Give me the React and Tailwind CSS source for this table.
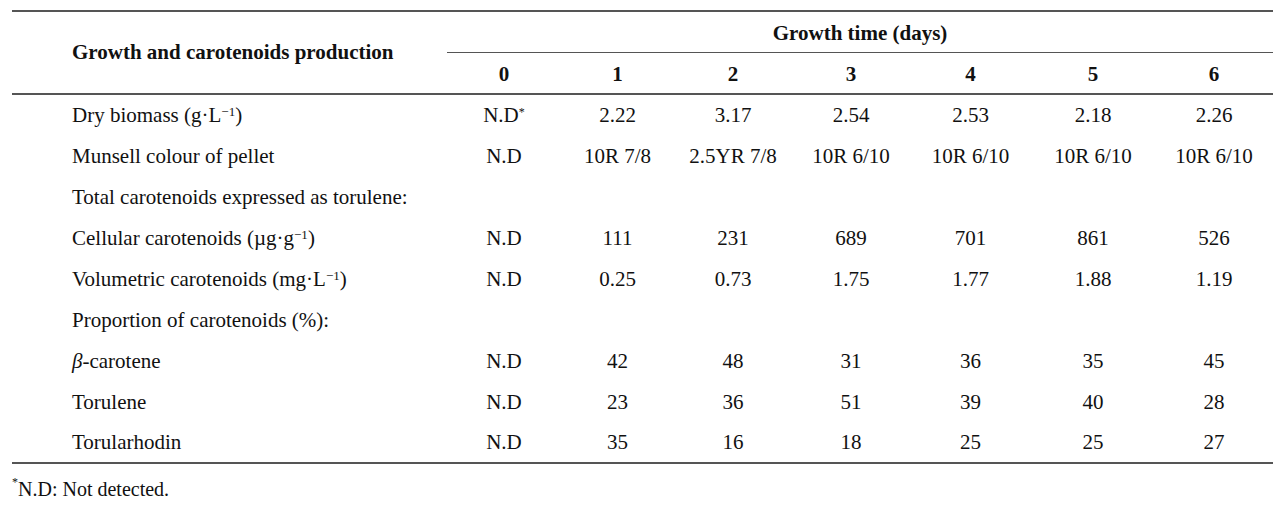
const cols = "grid grid-cols-[435px_114px_113px_118px_118px_121px_124px_118px]";

const rows = [
  { label: <>Dry biomass (g·L<sup className="text-[13px]">−1</sup>)</>, values: ["N.D*", "2.22", "3.17", "2.54", "2.53", "2.18", "2.26"] },
  { label: "Munsell colour of pellet", values: ["N.D", "10R 7/8", "2.5YR 7/8", "10R 6/10", "10R 6/10", "10R 6/10", "10R 6/10"] },
  { label: "Total carotenoids expressed as torulene:" },
  { label: <>Cellular carotenoids (µg·g<sup className="text-[13px]">−1</sup>)</>, values: ["N.D", "111", "231", "689", "701", "861", "526"] },
  { label: <>Volumetric carotenoids (mg·L<sup className="text-[13px]">−1</sup>)</>, values: ["N.D", "0.25", "0.73", "1.75", "1.77", "1.88", "1.19"] },
  { label: "Proportion of carotenoids (%):" },
  { label: <><i>β</i>-carotene</>, values: ["N.D", "42", "48", "31", "36", "35", "45"] },
  { label: "Torulene", values: ["N.D", "23", "36", "51", "39", "40", "28"] },
  { label: "Torularhodin", values: ["N.D", "35", "16", "18", "25", "25", "27"] },
];

function Value({ v }) {
  if (v.endsWith("*")) {
    return (
      <span>
        {v.slice(0, -1)}
        <sup className="text-[12px]">*</sup>
      </span>
    );
  }
  return <span>{v}</span>;
}

export default function App() {
  return (
    <div className="w-[1282px] h-[508px] bg-white text-[#111] font-['Liberation_Serif',serif] text-[21px] leading-none pl-3 pt-[10px]">
      <div className="w-[1261px]">
        {/* Header */}
        <div className={`${cols} border-t-2 border-b-2 border-[#555]`}>
          <div className="row-span-2 flex items-center pl-[60px] font-bold">
            Growth and carotenoids production
          </div>
          <div className="col-span-7 h-[41px] border-b border-[#555] flex items-center justify-center font-bold pt-[2px]">
            Growth time (days)
          </div>
          {[0, 1, 2, 3, 4, 5, 6].map((d) => (
            <div key={d} className="h-[40px] flex items-center justify-center font-bold pt-[3px]">
              {d}
            </div>
          ))}
        </div>

        {/* Body */}
        <div className="border-b-2 border-[#555]">
          {rows.map((r, i) => (
            <div
              key={i}
              className={`${cols} ${i === rows.length - 1 ? "h-[39px] pb-[1px]" : "h-[41px]"} items-center`}
            >
              <div className="pl-[60px] whitespace-nowrap">{r.label}</div>
              {r.values &&
                r.values.map((v, j) => (
                  <div key={j} className="text-center whitespace-nowrap">
                    <Value v={v} />
                  </div>
                ))}
            </div>
          ))}
        </div>

        <div className="text-[20px] pt-[15px]">
          <sup className="text-[12px] -top-[0.8em]">*</sup>N.D: Not detected.
        </div>
      </div>
    </div>
  );
}
